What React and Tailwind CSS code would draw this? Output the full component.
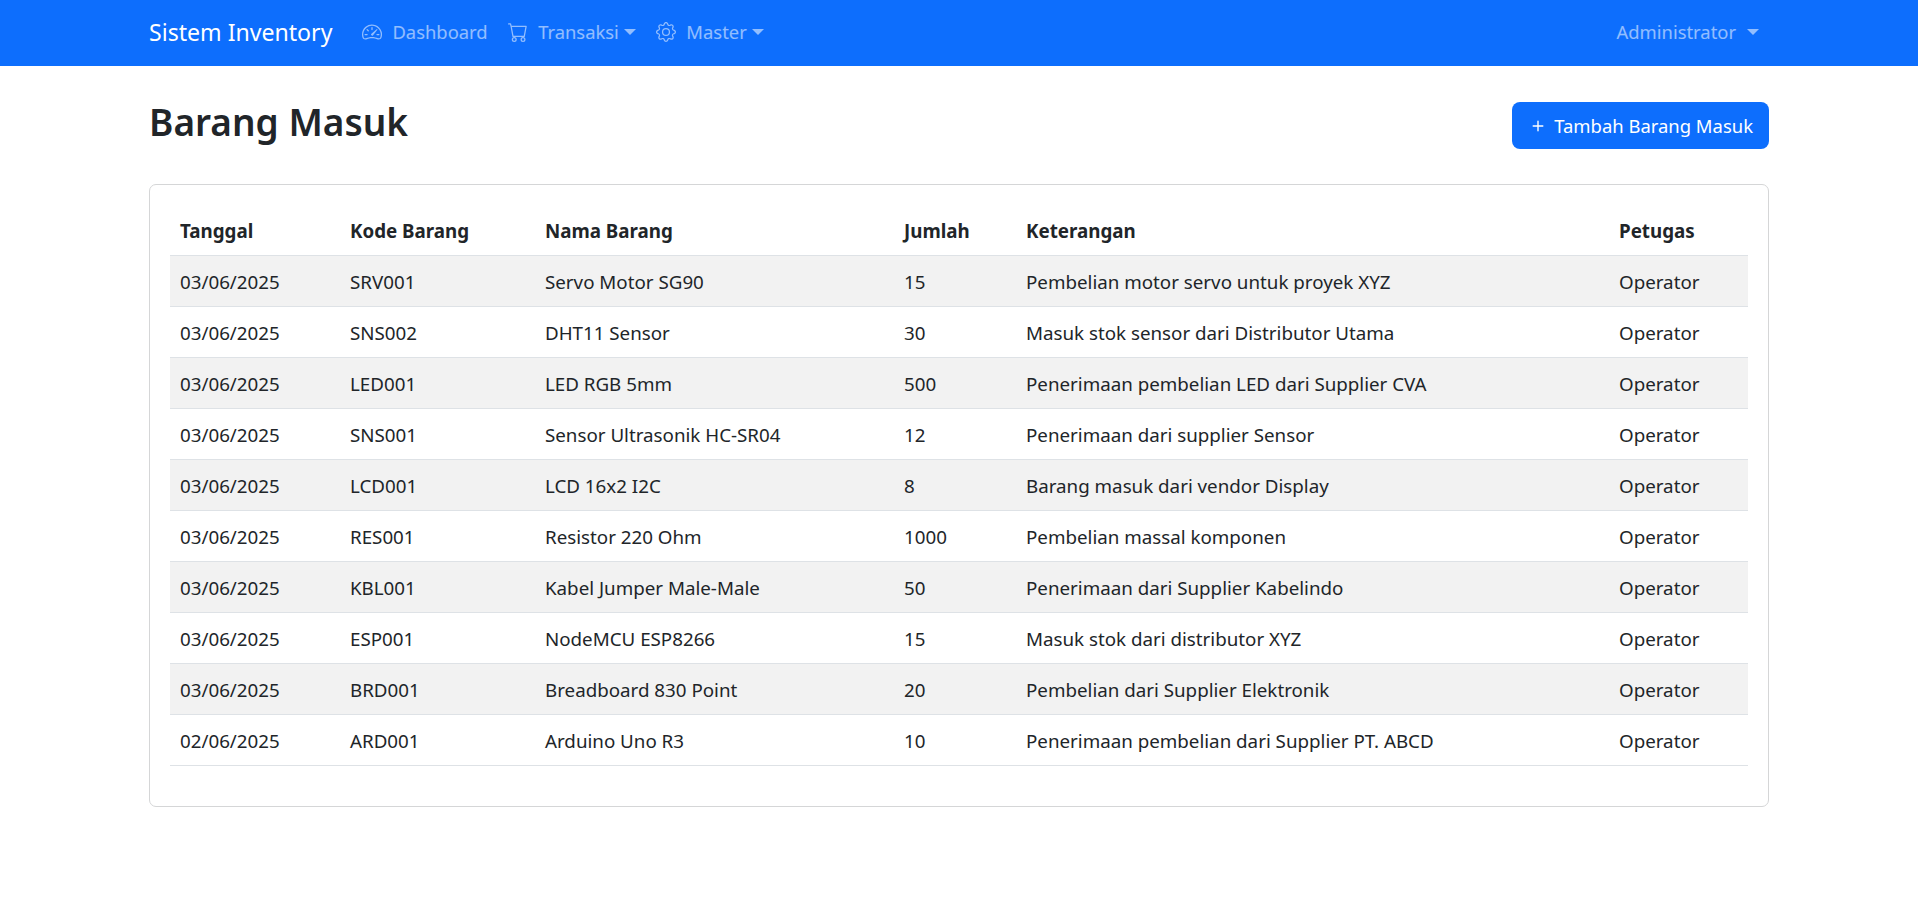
import React from "react";
import { BsSpeedometer2, BsCart, BsGear, BsPlus } from "react-icons/bs";

const rows = [
  ["03/06/2025", "SRV001", "Servo Motor SG90", "15", "Pembelian motor servo untuk proyek XYZ"],
  ["03/06/2025", "SNS002", "DHT11 Sensor", "30", "Masuk stok sensor dari Distributor Utama"],
  ["03/06/2025", "LED001", "LED RGB 5mm", "500", "Penerimaan pembelian LED dari Supplier CVA"],
  ["03/06/2025", "SNS001", "Sensor Ultrasonik HC-SR04", "12", "Penerimaan dari supplier Sensor"],
  ["03/06/2025", "LCD001", "LCD 16x2 I2C", "8", "Barang masuk dari vendor Display"],
  ["03/06/2025", "RES001", "Resistor 220 Ohm", "1000", "Pembelian massal komponen"],
  ["03/06/2025", "KBL001", "Kabel Jumper Male-Male", "50", "Penerimaan dari Supplier Kabelindo"],
  ["03/06/2025", "ESP001", "NodeMCU ESP8266", "15", "Masuk stok dari distributor XYZ"],
  ["03/06/2025", "BRD001", "Breadboard 830 Point", "20", "Pembelian dari Supplier Elektronik"],
  ["02/06/2025", "ARD001", "Arduino Uno R3", "10", "Penerimaan pembelian dari Supplier PT. ABCD"],
];

const Caret = () => (
  <span className="ml-[5px] inline-block w-0 h-0 border-x-[6px] border-x-transparent border-t-[6px] border-t-current" />
);

const NavItem = ({ icon, label, caret }) => (
  <a className="flex items-center pl-[10px] pr-[10.5px] text-white/55 text-[18.4px] whitespace-nowrap">
    {icon}
    <span>{label}</span>
    {caret && <Caret />}
  </a>
);

export default function App() {
  return (
    <div className="min-h-[900px] bg-white text-[#212529] text-[18.75px] font-['Noto_Sans','Open_Sans',sans-serif]">
      <nav className="h-[66px] bg-[#0d6efd]">
        <div className="mx-auto w-[1620px] h-full flex items-center justify-between pb-[2px]">
          <div className="flex items-center">
            <span className="text-[23.1px] text-white mr-[20px] whitespace-nowrap">Sistem Inventory</span>
            <NavItem icon={<BsSpeedometer2 className="w-[20px] h-[20px] mr-[10px]" />} label="Dashboard" />
            <NavItem icon={<BsCart className="w-[20px] h-[20px] mr-[10px]" />} label="Transaksi" caret />
            <NavItem icon={<BsGear className="w-[20px] h-[20px] mr-[10px]" />} label="Master" caret />
          </div>
          <a className="flex items-center text-white/55 text-[18.4px] px-[10px]">
            <span>Administrator</span>
            <span className="ml-[6px] flex"><Caret /></span>
          </a>
        </div>
      </nav>
      <main className="mx-auto w-[1620px] pt-[34px]">
        <div className="flex items-start justify-between mb-[35px]">
          <h1 className="text-[37px] leading-[44px] font-semibold">Barang Masuk</h1>
          <button className="h-[47px] mt-[2px] pl-[15px] pr-[16px] rounded-[8px] bg-[#0d6efd] text-white text-[18.45px] flex items-center">
            <BsPlus className="w-[22px] h-[22px] mr-[5px]" />
            Tambah Barang Masuk
          </button>
        </div>
        <div className="border border-[#d5d6d7] rounded-[7px] p-[20px] pb-[40px]">
          <table className="w-full table-fixed border-collapse">
            <colgroup>
              <col className="w-[170px]" />
              <col className="w-[195px]" />
              <col className="w-[359px]" />
              <col className="w-[122px]" />
              <col className="w-[593px]" />
              <col className="w-[139px]" />
            </colgroup>
            <thead>
              <tr className="border-b border-[#dee2e6]">
                {["Tanggal", "Kode Barang", "Nama Barang", "Jumlah", "Keterangan", "Petugas"].map((h) => (
                  <th key={h} className="text-left font-bold px-[10px] pt-[12px] pb-[11px] leading-[27px]">{h}</th>
                ))}
              </tr>
            </thead>
            <tbody>
              {rows.map((r, i) => (
                <tr key={i} className={`border-b border-[#dee2e6] ${i % 2 === 0 ? "bg-[#f2f2f2]" : ""}`}>
                  {[...r, "Operator"].map((c, j) => (
                    <td key={j} className="px-[10px] pt-[13px] pb-[11px] leading-[26px] whitespace-nowrap">{c}</td>
                  ))}
                </tr>
              ))}
            </tbody>
          </table>
        </div>
      </main>
    </div>
  );
}
